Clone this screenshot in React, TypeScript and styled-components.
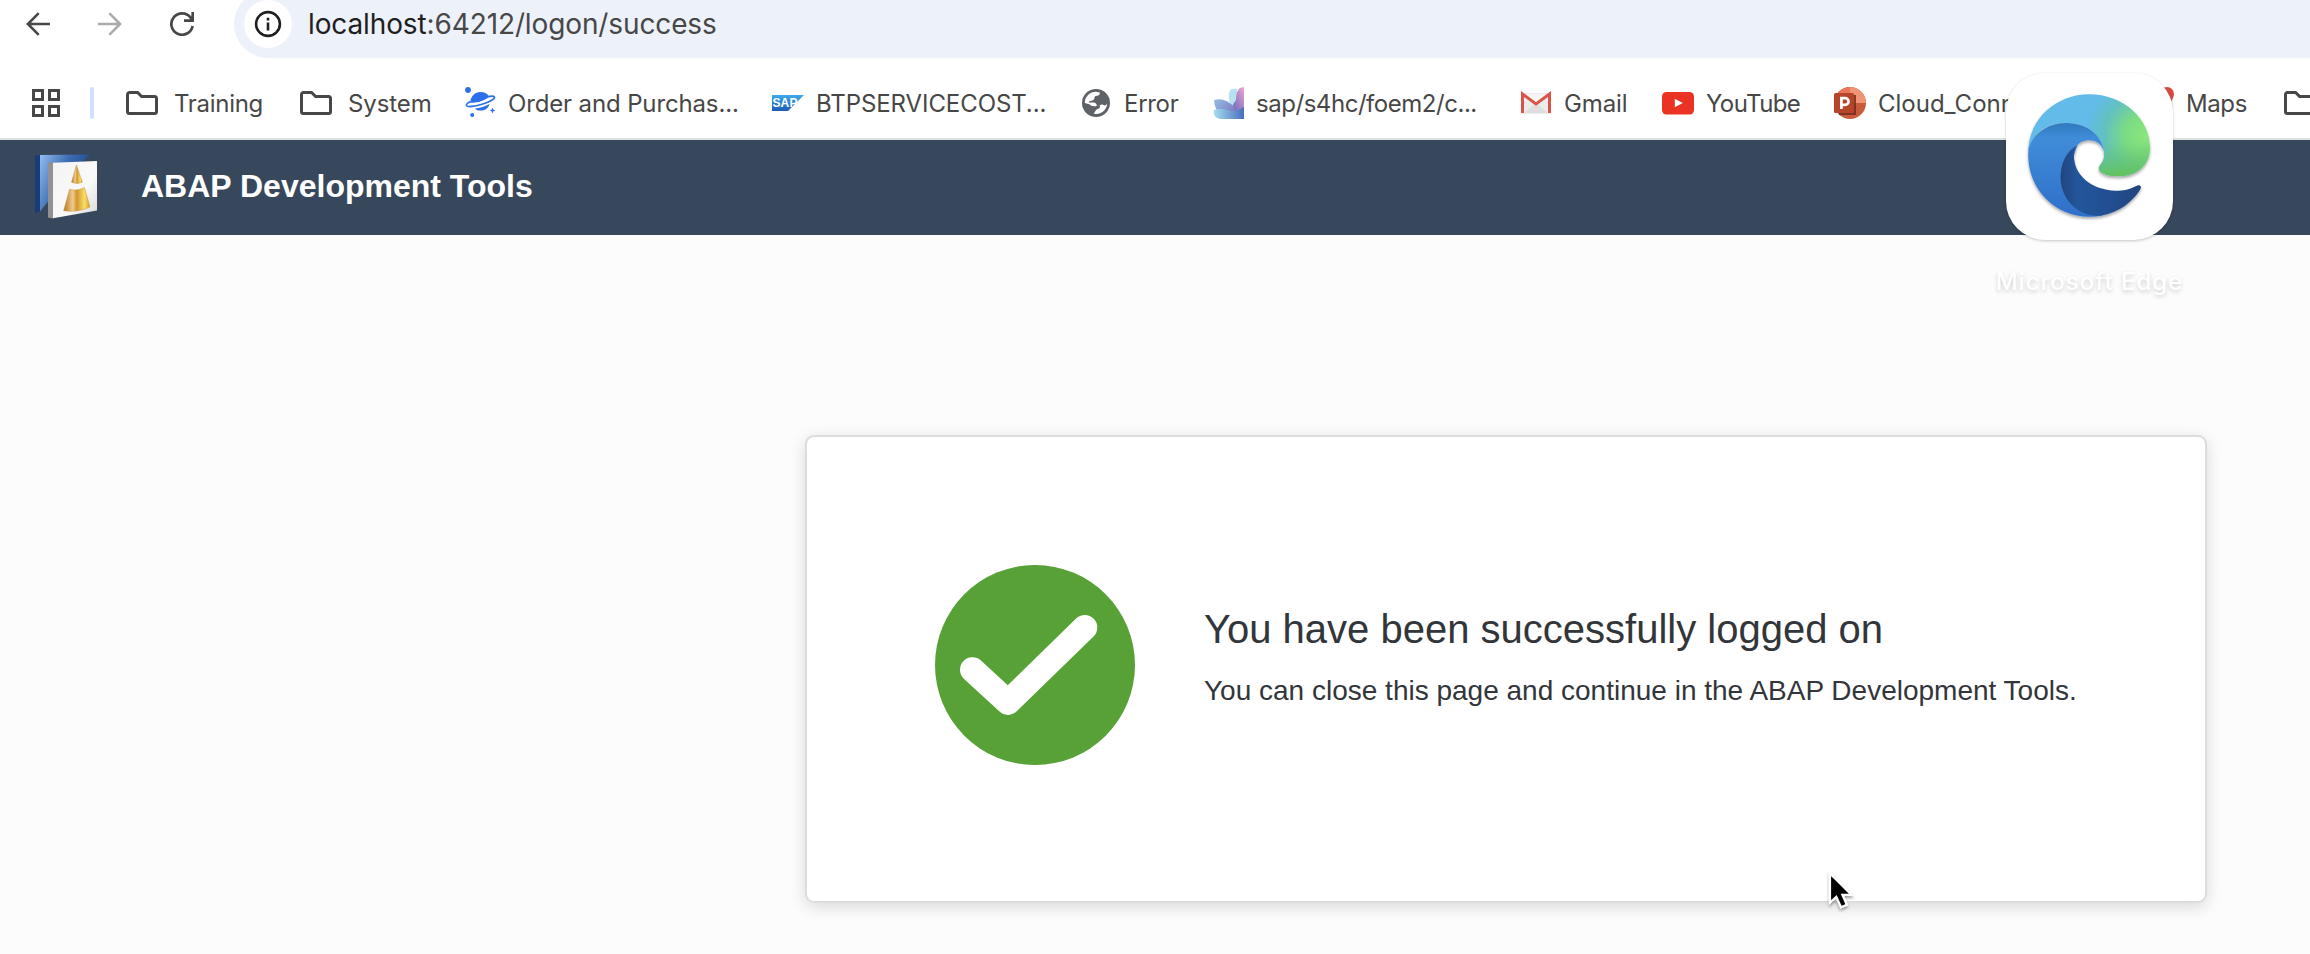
import React from "react";
import styled, { createGlobalStyle } from "styled-components";

const GlobalStyle = createGlobalStyle`
  * { box-sizing: border-box; }
  body { margin: 0; background: #fcfcfc; overflow: hidden; }
  svg { display: block; flex: none; }
`;

const Screen = styled.div`
  position: relative;
  display: flex;
  flex-direction: column;
  width: 2310px;
  height: 954px;
  overflow: hidden;
  background: #fcfcfc;
  white-space: nowrap;
`;

const Toolbar = styled.div`
  display: flex;
  flex: none;
  height: 58px;
  padding-left: 20px;
  overflow: hidden;
  background: #fff;
`;

const NavButton = styled.div<{ $dim?: boolean }>`
  display: flex;
  align-items: center;
  justify-content: center;
  width: 36px;
  height: 48px;
  margin-right: 36px;
  color: ${(p) => (p.$dim ? "#ababab" : "#474747")};
`;

const AddressBar = styled.div`
  display: flex;
  flex: 1;
  align-items: center;
  height: 68px;
  margin-top: -10px;
  margin-left: -2px;
  padding-left: 10px;
  border-radius: 34px 0 0 34px;
  background: #edf1fa;
`;

const InfoBadge = styled.div`
  display: flex;
  align-items: center;
  justify-content: center;
  width: 48px;
  height: 48px;
  border-radius: 50%;
  background: #fff;
`;

const Url = styled.div`
  margin-left: 16px;
  font: 400 28px/40px Inter, "Liberation Sans", sans-serif;
  letter-spacing: -0.12px;
  color: #474747;
`;

const Host = styled.span`
  color: #1f1f1f;
`;

const BookmarkBar = styled.div`
  display: flex;
  flex: none;
  align-items: center;
  height: 82px;
  padding: 12px 0 2px 32px;
  border-bottom: 2px solid #dfe1e0;
  background: #fff;
`;

const Divider = styled.div`
  flex: none;
  width: 4px;
  height: 32px;
  margin: 0 32px 0 30px;
  border-radius: 2px;
  background: #d3e0fd;
`;

const Bookmark = styled.div<{ $width: number }>`
  display: flex;
  flex: none;
  align-items: center;
  width: ${(p) => p.$width}px;
  height: 40px;
`;

const BookmarkLabel = styled.span<{ $gap: number; $spacing: number }>`
  margin-left: ${(p) => p.$gap}px;
  padding-top: 2px;
  font: 400 24px/32px Inter, "Liberation Sans", sans-serif;
  letter-spacing: ${(p) => p.$spacing}px;
  color: #474747;
`;

const AppHeader = styled.header`
  display: flex;
  flex: none;
  align-items: center;
  height: 95px;
  padding-left: 35px;
  background: #38485c;
`;

const AppTitle = styled.h1`
  margin: 0 0 3px 42px;
  font: 700 32px/40px "Liberation Sans", Arial, sans-serif;
  color: #fff;
`;

const Main = styled.main`
  display: flex;
  flex: 1;
  align-items: flex-start;
  padding: 200px 0 0 805px;
`;

const Card = styled.section`
  display: flex;
  align-items: flex-start;
  width: 1402px;
  height: 468px;
  padding: 128px;
  border: 2px solid #dcdcdc;
  border-radius: 9px;
  background: #fff;
  box-shadow: 0 4px 16px rgba(0, 0, 0, 0.14);
`;

const Message = styled.div`
  margin: 40px 0 0 69px;
  font-family: "Liberation Sans", Arial, sans-serif;
  color: #32363a;
`;

const MessageTitle = styled.h2`
  margin: 0;
  font-size: 40px;
  font-weight: 400;
  line-height: 48px;
`;

const MessageText = styled.p`
  margin: 22px 0 0;
  font-size: 28px;
  line-height: 32px;
`;

const AppSwitcher = styled.div`
  position: absolute;
  top: 73px;
  left: 1989px;
  display: flex;
  flex-direction: column;
  align-items: center;
  width: 201px;
`;

const AppTile = styled.div`
  width: 167px;
  height: 167px;
  border-radius: 39px;
  background: #fff;
  box-shadow: 0 1px 3px rgba(0, 0, 0, 0.22);
`;

const AppName = styled.div`
  margin-top: 26px;
  font: 500 24px/32px Inter, "Liberation Sans", sans-serif;
  letter-spacing: 1px;
  color: #fff;
  text-shadow: 0 2px 4px rgba(0, 0, 0, 0.18);
`;

const Pointer = styled.svg`
  position: absolute;
  top: 867px;
  left: 1824px;
`;

const BackIcon = () => (
  <svg width="24" height="24" viewBox="0 0 24 24" fill="none" stroke="currentColor" strokeWidth="2.6">
    <path d="M24 12H2.5M12.7 1.2L1.9 12l10.8 10.8" />
  </svg>
);

const ForwardIcon = () => (
  <svg width="24" height="24" viewBox="0 0 24 24" fill="none" stroke="currentColor" strokeWidth="2.6">
    <path d="M0 12h21.5M11.3 1.2L22.1 12 11.3 22.8" />
  </svg>
);

const ReloadIcon = () => (
  <svg width="24" height="24" viewBox="0 0 24 24" fill="none" stroke="currentColor" strokeWidth="2.7">
    <path d="M22.6 14A10.7 10.7 0 1 1 20.6 5.6L22.6 8.6M22.7 0V8.7H14" />
  </svg>
);

const InfoIcon = () => (
  <svg width="28" height="28" viewBox="0 0 28 28" fill="none" stroke="#1f1f1f" strokeWidth="2.6">
    <circle cx="14" cy="14" r="11.9" />
    <path d="M14 12.6V20.4M14 7.7v2.7" />
  </svg>
);

const AppsIcon = () => (
  <svg width="28" height="28" viewBox="0 0 28 28" fill="none" stroke="#474747" strokeWidth="3">
    <path d="M1.5 1.5h9v9h-9zM17.5 1.5h9v9h-9zM1.5 17.5h9v9h-9zM17.5 17.5h9v9h-9z" />
  </svg>
);

const FolderIcon = () => (
  <svg width="32" height="24" viewBox="0 0 32 24" fill="none" stroke="#474747" strokeWidth="3">
    <path d="M3.5 1.5H11.6L15.6 5.5H28.5A2 2 0 0 1 30.5 7.5V20.5A2 2 0 0 1 28.5 22.5H3.5A2 2 0 0 1 1.5 20.5V3.5A2 2 0 0 1 3.5 1.5Z" />
  </svg>
);

const PlanetIcon = () => (
  <svg width="32" height="32" viewBox="0 0 32 32" fill="#2b6fee">
    <circle cx="4" cy="3" r="2.9" />
    <circle cx="8.2" cy="28" r="2" />
    <path d="M28.5 20.5l.9 2.2 2 .8-2 .8-.9 2.2-.9-2.2-2-.8 2-.8z" />
    <path d="M6.2 15.4C6.8 8.8 11.2 5 16.4 5C20.8 5 23.8 7 25 9.8C21.5 13.5 11 17 6.2 15.4Z" />
    <path d="M11 21.4C16 21 21.5 19.2 25.6 16.9C24.4 21 20.8 23.6 16.5 23.6C14.2 23.6 12.2 23 11 21.4Z" />
    <path
      d="M24 9.6C27.3 9 30 8.9 30.4 10C31 11.8 25.7 15.1 18 17.3C10 19.6 3.2 20.3 2.4 18.5C2 17.4 3.6 15.9 6.6 14.4"
      fill="none"
      stroke="#2b6fee"
      strokeWidth="1.7"
    />
    <path d="M5.2 17C10 17.6 22.5 14.2 27.3 11" fill="none" stroke="#fff" strokeWidth="1.3" />
  </svg>
);

const SapIcon = () => (
  <svg width="32" height="32" viewBox="0 0 32 32">
    <defs>
      <linearGradient id="sapBlue" x2="0" y2="1">
        <stop offset="0" stopColor="#3fa9ed" />
        <stop offset="1" stopColor="#1b5cb4" />
      </linearGradient>
    </defs>
    <path d="M0 8H32L16 24H0Z" fill="url(#sapBlue)" />
    <text x="0.4" y="20" fill="#fff" fontFamily="Liberation Sans, Arial, sans-serif" fontWeight="700" fontSize="12" textLength="25">
      SAP
    </text>
  </svg>
);

const GlobeIcon = () => (
  <svg width="32" height="32" viewBox="0 0 32 32">
    <circle cx="16" cy="16" r="14" fill="#5f6368" />
    <path
      d="M16 4.8L19.8 5.4C20 7.2 19 8.6 17 8.8C15 9 14.2 10 14.4 11.4C14 13 12 13.4 9.8 14L8.4 15.6H13.4C15.6 15.8 16.6 17.2 17 18.6H19.4C20.6 19.6 19.8 21.6 18 22C15.6 22 15.8 24.6 13.6 26.8A11.2 11.2 0 0 0 27.2 16.4C26 18.4 24.8 18.8 23.4 18C22 17.2 20.8 17.4 20 18.4L17 18.4C14.8 20 10.8 19 10 17.6L4.8 16A11.2 11.2 0 0 1 16 4.8Z"
      fill="#fff"
    />
  </svg>
);

const FlowerIcon = () => (
  <svg width="32" height="32" viewBox="0 0 32 32">
    <defs>
      <linearGradient id="petalPink" x1="1" y1="0" x2="0.3" y2="1">
        <stop offset="0" stopColor="#f6a2d2" />
        <stop offset="0.55" stopColor="#9c80c4" />
        <stop offset="1" stopColor="#5a68bd" />
      </linearGradient>
      <linearGradient id="petalBlue" x1="0" y1="0" x2="1" y2="0.7">
        <stop offset="0" stopColor="#94bfe4" />
        <stop offset="1" stopColor="#7a70bd" />
      </linearGradient>
      <linearGradient id="petalAqua" x1="0" y1="0" x2="1" y2="0">
        <stop offset="0" stopColor="#a8deef" />
        <stop offset="1" stopColor="#476dbd" />
      </linearGradient>
    </defs>
    <path d="M18 3Q21 1 25 2L27 20H19Q15 10 18 3Z" fill="#b7e0f0" />
    <path d="M32 0V32H19Q18 20 24 13Q24 4 28 1Z" fill="url(#petalPink)" />
    <path d="M2 13Q13 10 22 20L27 32H13Q2 24 2 13Z" fill="url(#petalBlue)" />
    <path d="M2 23Q10 20 18 24Q26 24 32 20V32H8Q0 30 2 23Z" fill="url(#petalAqua)" />
  </svg>
);

const GmailIcon = () => (
  <svg width="32" height="32" viewBox="0 0 32 32">
    <path d="M1 6H31V27H1Z" fill="#ececec" />
    <path d="M4 26L16 16L28 26Z" fill="#dedede" />
    <path d="M3 7L16 18L29 7Z" fill="#f5f5f5" />
    <path d="M2.5 26V7L16 17L29.5 7V26" fill="none" stroke="#d8554a" strokeWidth="3" />
  </svg>
);

const YouTubeIcon = () => (
  <svg width="32" height="32" viewBox="0 0 32 32">
    <rect y="5" width="32" height="22.5" rx="4.5" fill="#ea3323" />
    <path d="M12.8 11.8L20.8 16L12.8 20.2Z" fill="#fff" />
  </svg>
);

const PowerPointIcon = () => (
  <svg width="32" height="32" viewBox="0 0 32 32">
    <circle cx="16" cy="16" r="16" fill="#c95a3c" />
    <path d="M16 0A16 16 0 0 1 32 16H16Z" fill="#f19474" />
    <path d="M16 0V16H0A16 16 0 0 1 16 0Z" fill="#e7785a" />
    <rect x="5" y="8" width="17" height="20" fill="#762c1b" opacity="0.85" />
    <rect y="6" width="20" height="20" rx="1.5" fill="#b64428" />
    <path d="M7.4 22V11.2H11.2A3.3 3.3 0 0 1 11.2 17.9H7.4" fill="none" stroke="#fff" strokeWidth="2.7" />
  </svg>
);

const MapsIcon = () => (
  <svg width="32" height="32" viewBox="0 0 32 32">
    <rect x="2" y="2" width="29" height="28" rx="4" fill="#e6eee5" />
    <path d="M25 0A7 7 0 0 1 32 7C32 12 25 20 25 20S18 12 18 7A7 7 0 0 1 25 0Z" fill="#d84b43" />
  </svg>
);

const ToolsLogo = () => (
  <svg width="64" height="70" viewBox="0 0 64 70">
    <defs>
      <linearGradient id="backSheet" x1="0" y1="0" x2="1" y2="0.45">
        <stop offset="0" stopColor="#93bdf0" />
        <stop offset="0.5" stopColor="#3c6db2" />
        <stop offset="1" stopColor="#1d447f" />
      </linearGradient>
      <linearGradient id="gold" x2="1">
        <stop offset="0" stopColor="#b87425" />
        <stop offset="0.35" stopColor="#efcc8c" />
        <stop offset="0.5" stopColor="#d29632" />
        <stop offset="0.8" stopColor="#f8df67" />
        <stop offset="1" stopColor="#d59a26" />
      </linearGradient>
      <linearGradient id="paper" x2="1" y2="1">
        <stop offset="0" stopColor="#f3f3f4" />
        <stop offset="0.6" stopColor="#fafafa" />
        <stop offset="1" stopColor="#d8d8d9" />
      </linearGradient>
    </defs>
    <path d="M0 2.5L5 2.1V58.5L0 60Z" fill="#183c76" />
    <path d="M5 2.1L55 1.5L46 10H15V46L5 58.5Z" fill="url(#backSheet)" />
    <path d="M13 10L18 9.5V65.5L13 64.5Z" fill="#929292" />
    <path d="M18 9.8L62 7.9V57.5L18 65.3Z" fill="url(#paper)" />
    <path d="M41.4 12L47.4 29.2Q42 31.8 36.5 29.2Z" fill="url(#gold)" stroke="#c99647" strokeWidth="0.5" />
    <path d="M34.5 36.3Q41.5 38.5 49.5 34.5L55 54Q42 60 28.6 57.7Z" fill="url(#gold)" stroke="#c99647" strokeWidth="0.5" />
  </svg>
);

const SuccessIcon = () => (
  <svg width="200" height="200" viewBox="0 0 200 200">
    <circle cx="100" cy="100" r="100" fill="#57a136" />
    <path
      d="M37.5 104.8L73 137.4L149.8 62.5"
      fill="none"
      stroke="#fff"
      strokeWidth="25"
      strokeLinecap="round"
      strokeLinejoin="round"
    />
  </svg>
);

const EdgeLogo = () => (
  <svg width="167" height="167" viewBox="138 8 502 502">
    <defs>
      <radialGradient id="edgeGreen" gradientUnits="userSpaceOnUse" cx="555" cy="195" r="175">
        <stop offset="0" stopColor="#8ae67a" />
        <stop offset="0.35" stopColor="#7bdb84" />
        <stop offset="0.7" stopColor="#62c1c0" />
        <stop offset="1" stopColor="#62bbe8" />
      </radialGradient>
      <linearGradient id="edgeLip" gradientUnits="userSpaceOnUse" x1="0" y1="215" x2="0" y2="315">
        <stop offset="0" stopColor="#63c45e" stopOpacity="0" />
        <stop offset="1" stopColor="#63c45e" />
      </linearGradient>
      <linearGradient id="edgeBlue" gradientUnits="userSpaceOnUse" x1="0" y1="158" x2="0" y2="440">
        <stop offset="0" stopColor="#2f79bd" />
        <stop offset="0.16" stopColor="#408cd8" />
        <stop offset="1" stopColor="#2f6fc9" />
      </linearGradient>
      <linearGradient id="edgeNavy" gradientUnits="userSpaceOnUse" x1="302" y1="0" x2="543" y2="0">
        <stop offset="0" stopColor="#1f457e" />
        <stop offset="0.2" stopColor="#24559a" />
        <stop offset="0.6" stopColor="#244f92" />
        <stop offset="1" stopColor="#22447e" />
      </linearGradient>
      <filter id="edgeShade" x="-10%" y="-10%" width="120%" height="125%">
        <feDropShadow dx="0" dy="6" stdDeviation="4" floodOpacity="0.35" />
      </filter>
    </defs>
    <g filter="url(#edgeShade)">
      <path
        d="M205 245C205 145 290 72 388 72C490 72 571 145 571 232C571 285 530 318 480 318C440 318 417 308 417 294C417 284 434 278 433 250C430 200 385 158 318 158C260 158 215 190 205 245Z"
        fill="url(#edgeGreen)"
      />
      <path
        d="M433 215H571V232C571 285 530 318 480 318C440 318 417 308 417 294C417 284 434 278 433 250Z"
        fill="url(#edgeLip)"
      />
      <path
        d="M205 245C210 195 262 158 318 158C388 158 428 200 433 246C428 222 410 210 388 210C370 210 358 217 352 226L342 257L345 300L385 400L430 436Q410 440 388 440C285 440 200 355 205 245Z"
        fill="url(#edgeBlue)"
      />
      <path
        d="M352 226C318 242 301 285 302 325C304 390 355 435 410 437C470 435 520 395 543 355C546 348 540 343 533 346C510 358 490 362 468 362C395 360 342 315 342 257C342 245 346 235 352 226Z"
        fill="url(#edgeNavy)"
      />
    </g>
  </svg>
);

type BookmarkEntry = {
  label: string;
  width: number;
  icon: React.ReactNode;
  spacing: number;
  gap?: number;
};

const bookmarks: BookmarkEntry[] = [
  { label: "Training", width: 174, icon: <FolderIcon />, spacing: -0.3, gap: 16 },
  { label: "System", width: 164, icon: <FolderIcon />, spacing: -0.1, gap: 16 },
  { label: "Order and Purchas...", width: 308, icon: <PlanetIcon />, spacing: -0.14 },
  { label: "BTPSERVICECOST...", width: 308, icon: <SapIcon />, spacing: -0.08 },
  { label: "Error", width: 132, icon: <GlobeIcon />, spacing: -0.3 },
  { label: "sap/s4hc/foem2/c...", width: 308, icon: <FlowerIcon />, spacing: -0.46 },
  { label: "Gmail", width: 142, icon: <GmailIcon />, spacing: -0.1 },
  { label: "YouTube", width: 172, icon: <YouTubeIcon />, spacing: -0.6 },
  { label: "Cloud_Connector", width: 308, icon: <PowerPointIcon />, spacing: 0 },
  { label: "Maps", width: 142, icon: <MapsIcon />, spacing: -0.4 },
  { label: "", width: 32, icon: <FolderIcon />, spacing: 0 },
];

export default function App() {
  return (
    <Screen>
      <GlobalStyle />
      <Toolbar>
        <NavButton><BackIcon /></NavButton>
        <NavButton $dim><ForwardIcon /></NavButton>
        <NavButton><ReloadIcon /></NavButton>
        <AddressBar>
          <InfoBadge><InfoIcon /></InfoBadge>
          <Url><Host>localhost</Host>:64212/logon/success</Url>
        </AddressBar>
      </Toolbar>
      <BookmarkBar>
        <AppsIcon />
        <Divider />
        {bookmarks.map((b, i) => (
          <Bookmark key={i} $width={b.width}>
            {b.icon}
            {b.label && <BookmarkLabel $gap={b.gap ?? 12} $spacing={b.spacing}>{b.label}</BookmarkLabel>}
          </Bookmark>
        ))}
      </BookmarkBar>
      <AppHeader>
        <ToolsLogo />
        <AppTitle>ABAP Development Tools</AppTitle>
      </AppHeader>
      <Main>
        <Card>
          <SuccessIcon />
          <Message>
            <MessageTitle>You have been successfully logged on</MessageTitle>
            <MessageText>You can close this page and continue in the ABAP Development Tools.</MessageText>
          </Message>
        </Card>
      </Main>
      <AppSwitcher>
        <AppTile><EdgeLogo /></AppTile>
        <AppName>Microsoft Edge</AppName>
      </AppSwitcher>
      <Pointer width="32" height="46" viewBox="0 0 32 46">
        <defs>
          <filter id="pointerShade" x="-30%" y="-20%" width="160%" height="150%">
            <feDropShadow dx="0" dy="2" stdDeviation="1.6" floodOpacity="0.4" />
          </filter>
        </defs>
        <path
          d="M6 6.5V35.5L12.3 29.8L17 40.3L22.8 37.8L18.4 27.8H27.4Z"
          fill="#000"
          stroke="#fff"
          strokeWidth="2.2"
          filter="url(#pointerShade)"
        />
      </Pointer>
    </Screen>
  );
}
